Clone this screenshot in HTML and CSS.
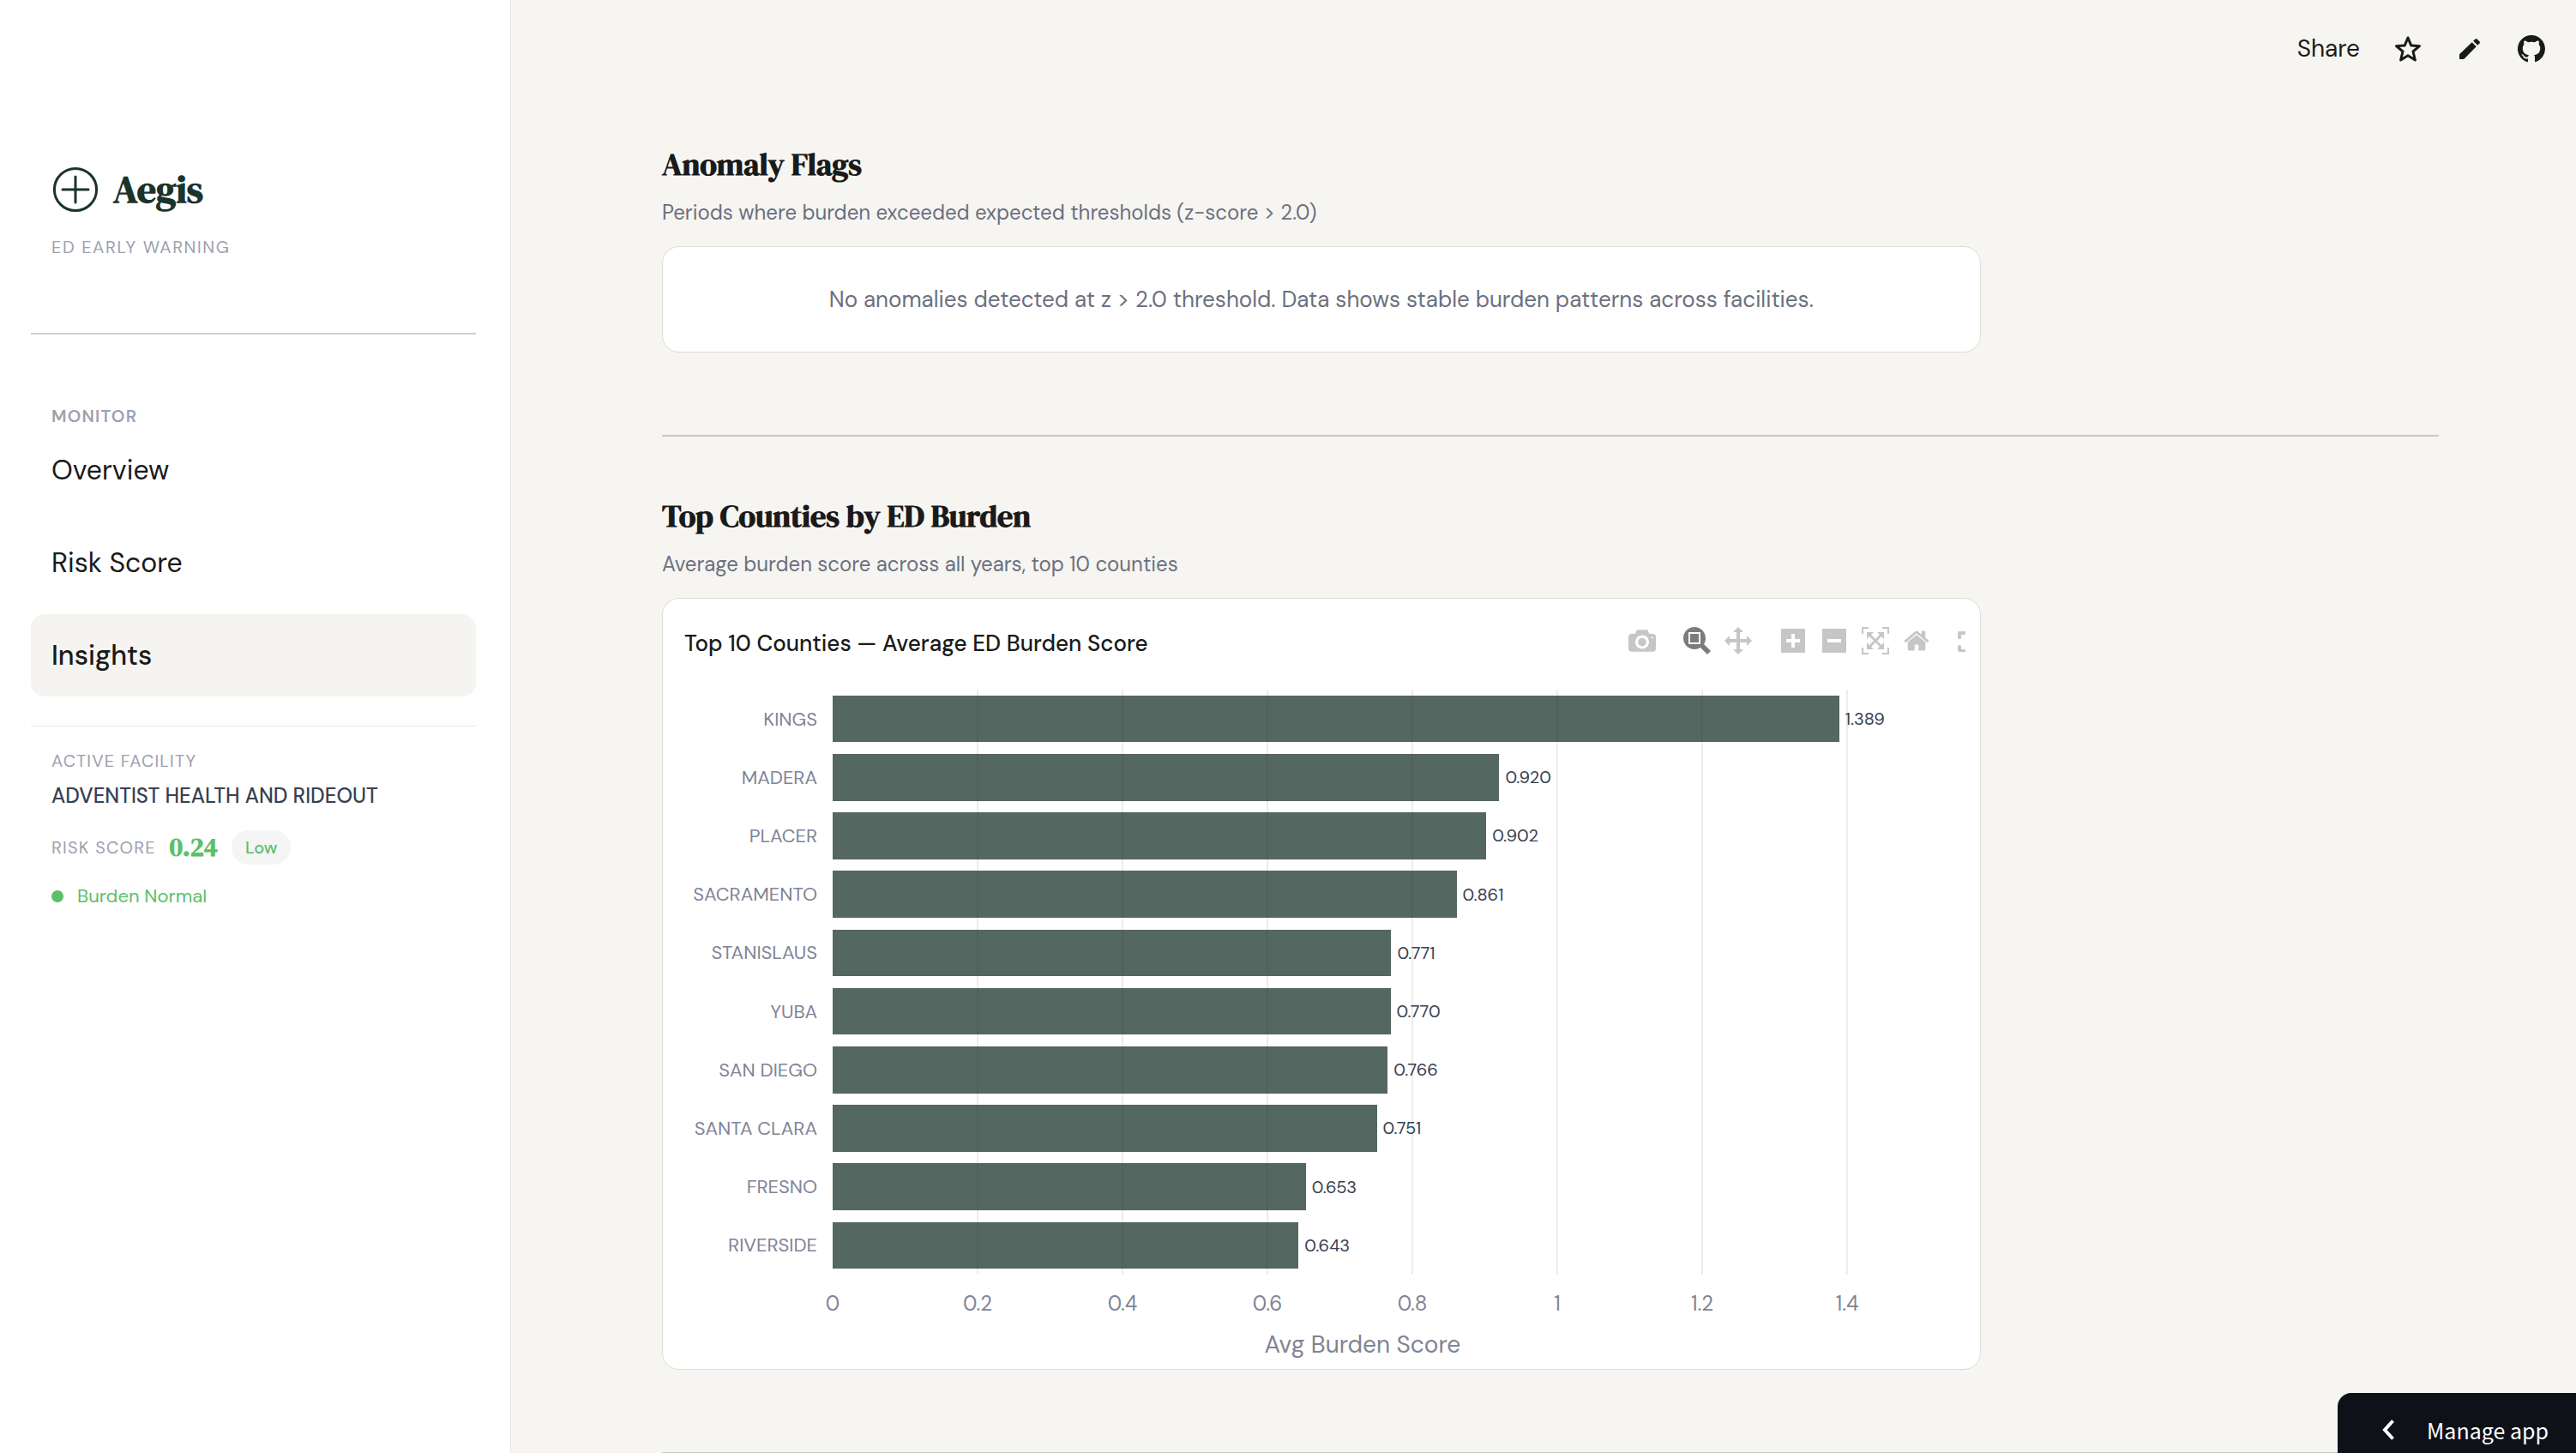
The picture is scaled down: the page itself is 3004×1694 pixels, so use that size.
FILE: index.html
```html
<!DOCTYPE html>
<html lang="en">
<head>
<meta charset="utf-8">
<meta name="viewport" content="width=device-width, initial-scale=1">
<title>Aegis – Insights</title>
<link rel="stylesheet" href="styles.css">
</head>
<body>
<div class="app">
  <aside class="sidebar">
    <div class="brand">
      <svg class="brand-mark" viewBox="0 0 28 28" fill="none" stroke="currentColor" stroke-width="1.5" stroke-linecap="round" aria-hidden="true"><circle cx="14" cy="14" r="12.3"/><path d="M14 6.5v15M6.5 14h15"/></svg>
      <span class="brand-name">Aegis</span>
    </div>
    <p class="tagline">ED EARLY WARNING</p>
    <hr class="rule">
    <p class="nav-title">MONITOR</p>
    <nav class="nav">
      <a class="nav-item" href="#overview">Overview</a>
      <a class="nav-item" href="#risk">Risk Score</a>
      <a class="nav-item is-active" href="#insights" aria-current="page">Insights</a>
    </nav>
    <section class="facility">
      <p class="caps">ACTIVE FACILITY</p>
      <p class="facility-name">ADVENTIST HEALTH AND RIDEOUT</p>
      <div class="risk"><span class="caps">RISK SCORE</span><strong class="risk-value">0.24</strong><span class="pill">Low</span></div>
      <p class="status"><span class="dot"></span>Burden Normal</p>
    </section>
  </aside>

  <main class="main">
    <header class="toolbar">
      <button class="tool" type="button">Share</button>
      <button class="tool" type="button" aria-label="Star"><svg viewBox="0 0 32 32" fill="none" stroke="currentColor" stroke-width="3" stroke-linejoin="round" aria-hidden="true"><path d="M16 3l3.700 8.900 9.800.8-7.500 6.300 2.400 10-8.400-5.200L7.600 29 10 19l-7.500-6.300 9.800-.8z"/></svg></button>
      <button class="tool" type="button" aria-label="Edit"><svg viewBox="0 0 24 24" fill="currentColor" aria-hidden="true"><path d="M3.600 21a.6.6 0 0 1-.6-.6v-3c0-.4.1-.7.400-1L14.060 6.190l3.750 3.750L7.500 20.500c-.2.300-.6.500-1 .5zM20.710 7.040a1 1 0 0 0 0-1.410l-2.340-2.340a1 1 0 0 0-1.410 0l-1.830 1.830 3.750 3.750z"/></svg></button>
      <button class="tool" type="button" aria-label="View source on GitHub"><svg viewBox="0 0 16 16" fill="currentColor" aria-hidden="true"><path d="M8 0C3.580 0 0 3.580 0 8c0 3.540 2.290 6.530 5.470 7.590.4.070.55-.17.55-.38 0-.19-.01-.82-.01-1.490-2.010.37-2.530-.49-2.690-.94-.09-.23-.48-.94-.82-1.130-.28-.15-.68-.52-.01-.53.63-.01 1.080.58 1.230.82.72 1.210 1.870.87 2.330.66.07-.52.28-.87.51-1.070-1.780-.2-3.640-.89-3.640-3.950 0-.87.31-1.590.82-2.150-.08-.2-.36-1.020.08-2.120 0 0 .67-.21 2.200.82.640-.18 1.320-.27 2-.27s1.360.09 2 .27c1.530-1.040 2.200-.82 2.200-.82.440 1.100.160 1.920.080 2.120.510.560.820 1.270.820 2.150 0 3.070-1.870 3.750-3.650 3.950.290.250.540.730.540 1.480 0 1.070-.01 1.930-.01 2.200 0 .21.150.46.550.38A8.010 8.010 0 0 0 16 8c0-4.420-3.580-8-8-8z"/></svg></button>
    </header>

    <div class="content">
      <section class="columns">
        <div>
          <h2 class="heading">Anomaly Flags</h2>
          <p class="subhead">Periods where burden exceeded expected thresholds (z-score &gt; 2.0)</p>
          <div class="card notice">No anomalies detected at z &gt; 2.0 threshold. Data shows stable burden patterns across facilities.</div>
        </div>
      </section>

      <hr class="rule rule-main">

      <section class="columns">
        <div>
          <h2 class="heading">Top Counties by ED Burden</h2>
          <p class="subhead">Average burden score across all years, top 10 counties</p>
          <figure class="card chart">
            <div class="chart-head">
              <figcaption class="chart-title">Top 10 Counties — Average ED Burden Score</figcaption>
              <div class="modebar">
                <button class="mode" type="button" aria-label="Download plot as a png"><svg viewBox="0 0 1000 1000"><path transform="matrix(1 0 0 -1 0 850)" d="m500 450c-83 0-150-67-150-150 0-83 67-150 150-150 83 0 150 67 150 150 0 83-67 150-150 150z m400 150h-120c-16 0-34 13-39 29l-31 93c-6 15-23 28-40 28h-340c-16 0-34-13-39-28l-31-94c-6-15-23-28-40-28h-120c-55 0-100-45-100-100v-450c0-55 45-100 100-100h800c55 0 100 45 100 100v450c0 55-45 100-100 100z m-400-550c-138 0-250 112-250 250 0 138 112 250 250 250 138 0 250-112 250-250 0-138-112-250-250-250z m365 380c-19 0-35 16-35 35 0 19 16 35 35 35 19 0 35-16 35-35 0-19-16-35-35-35z"/></svg></button>
                <button class="mode mode-group is-on" type="button" aria-label="Zoom"><svg viewBox="0 0 1000 1000"><path transform="matrix(1 0 0 -1 0 850)" d="m1000-25l-250 251c40 63 63 138 63 218 0 224-182 406-407 406-224 0-406-182-406-406s183-406 407-406c80 0 155 22 218 62l250-250 125 125z m-812 250l0 438 437 0 0-438-437 0z m62 375l313 0 0-312-313 0 0 312z"/></svg></button>
                <button class="mode" type="button" aria-label="Pan"><svg viewBox="0 0 1000 1000"><path transform="matrix(1 0 0 -1 0 850)" d="m1000 350l-187 188 0-125-250 0 0 250 125 0-188 187-187-187 125 0 0-250-250 0 0 125-188-188 186-187 0 125 252 0 0-250-125 0 187-188 188 188-125 0 0 250 250 0 0-126 187 188z"/></svg></button>
                <button class="mode mode-group" type="button" aria-label="Zoom in"><svg viewBox="0 0 875 1000"><path transform="matrix(1 0 0 -1 0 850)" d="m1 787l0-875 875 0 0 875-875 0z m687-500l-187 0 0-187-125 0 0 187-188 0 0 125 188 0 0 187 125 0 0-187 187 0 0-125z"/></svg></button>
                <button class="mode" type="button" aria-label="Zoom out"><svg viewBox="0 0 875 1000"><path transform="matrix(1 0 0 -1 0 850)" d="m0 788l0-876 875 0 0 876-875 0z m688-500l-500 0 0 125 500 0 0-125z"/></svg></button>
                <button class="mode" type="button" aria-label="Autoscale"><svg viewBox="0 0 1000 1000"><path transform="matrix(1 0 0 -1 0 850)" d="m250 850l-187 0-63 0 0-62 0-188 63 0 0 188 187 0 0 62z m688 0l-188 0 0-62 188 0 0-188 62 0 0 188 0 62-62 0z m-875-938l0 188-63 0 0-188 0-62 63 0 187 0 0 62-187 0z m875 188l0-188-188 0 0-62 188 0 62 0 0 62 0 188-62 0z m-125 188l-1 0-93-94-156 156 156 156 92-93 2 0 0 250-250 0 0-2 93-92-156-156-156 156 94 92 0 2-250 0 0-250 0 0 93 93 157-156-157-156-93 94 0 0 0-250 250 0 0 0-94 93 156 157 156-157-93-93 0 0 250 0 0 250z"/></svg></button>
                <button class="mode" type="button" aria-label="Reset axes"><svg viewBox="0 0 929 1000"><path transform="matrix(1 0 0 -1 0 850)" d="m786 296v-267q0-15-11-26t-25-10h-214v214h-143v-214h-214q-15 0-25 10t-11 26v267q0 1 0 2t0 2l321 264 321-264q1-1 1-4z m124 39l-34-41q-5-5-12-6h-2q-7 0-12 3l-386 322-386-322q-7-4-13-4-7 2-12 7l-35 41q-4 5-3 13t6 12l401 334q18 15 42 15t43-15l136-114v109q0 8 5 13t13 5h107q8 0 13-5t5-13v-227l122-102q5-5 6-12t-4-13z"/></svg></button>
                <button class="mode mode-group mode-cut" type="button" aria-label="Fullscreen"><svg viewBox="0 0 32 32"><path d="M2 5h6.500a.5.500 0 0 1 .5.500v2a1.500 1.500 0 0 1-1.500 1.500H4v3.500A1.500 1.500 0 0 1 2.500 14H1.500A1.500 1.500 0 0 1 0 12.500V7a2 2 0 0 1 2-2zM1.500 21h1A1.500 1.500 0 0 1 4 22.500V26h3.500A1.500 1.500 0 0 1 9 27.500v1a.5.500 0 0 1-.5.500H2a2 2 0 0 1-2-2v-4.500A1.500 1.500 0 0 1 1.500 21z"/></svg></button>
              </div>
            </div>
            <div class="chart-body">
              <ol class="y-labels">
                <li>KINGS</li><li>MADERA</li><li>PLACER</li><li>SACRAMENTO</li><li>STANISLAUS</li><li>YUBA</li><li>SAN DIEGO</li><li>SANTA CLARA</li><li>FRESNO</li><li>RIVERSIDE</li>
              </ol>
              <div class="plot">
                <div class="ticks gridlines" aria-hidden="true"><i></i><i></i><i></i><i></i><i></i><i></i><i></i><i></i></div>
                <div class="bars">
                  <div class="row"><span class="bar" style="width:95%"></span>1.389</div>
                  <div class="row"><span class="bar" style="width:62.92%"></span>0.920</div>
                  <div class="row"><span class="bar" style="width:61.69%"></span>0.902</div>
                  <div class="row"><span class="bar" style="width:58.89%"></span>0.861</div>
                  <div class="row"><span class="bar" style="width:52.73%"></span>0.771</div>
                  <div class="row"><span class="bar" style="width:52.66%"></span>0.770</div>
                  <div class="row"><span class="bar" style="width:52.39%"></span>0.766</div>
                  <div class="row"><span class="bar" style="width:51.36%"></span>0.751</div>
                  <div class="row"><span class="bar" style="width:44.66%"></span>0.653</div>
                  <div class="row"><span class="bar" style="width:43.98%"></span>0.643</div>
                </div>
              </div>
              <div class="x-axis">
                <div class="ticks tick-labels"><span>0</span><span>0.2</span><span>0.4</span><span>0.6</span><span>0.8</span><span>1</span><span>1.2</span><span>1.4</span></div>
                <p class="x-title">Avg Burden Score</p>
              </div>
            </div>
          </figure>
        </div>
      </section>

      <hr class="rule rule-main">
    </div>
  </main>
</div>

<button class="manage" type="button">
  <svg viewBox="0 0 14 24" fill="none" stroke="currentColor" stroke-width="4" aria-hidden="true"><path d="M12.500 1.500L3 12l9.500 10.500"/></svg>
  Manage app
</button>
</body>
</html>
```
FILE: styles.css
```css
:root {
  --ink: #1a1a1a;
  --muted: #6b7080;
  --faint: #9ca1af;
  --axis: #808495;
  --slate: #374151;
  --green: #5cbf6a;
  --forest: #1b342b;
  --paper: #f6f5f1;
  --serif: "DM Serif Display", "Liberation Serif", serif;
  --sans: "DM Sans", Roboto, sans-serif;
}

* { box-sizing: border-box; }

body {
  margin: 0;
  background: var(--paper);
  color: var(--ink);
  font-family: var(--sans);
}

p, h2, ol, figure { margin: 0; padding: 0; }
ol { list-style: none; }
svg { display: block; }

button {
  padding: 0;
  border: 0;
  background: none;
  color: inherit;
  font: inherit;
  cursor: pointer;
}

.app {
  display: grid;
  grid-template-columns: 596px minmax(0, 1fr);
  height: 100vh;
  overflow: hidden;
}

/* Sidebar */
.sidebar {
  padding: 193px 40px 0 36px;
  border-right: 1px solid #e6e5df;
  background: #fff;
}

.brand {
  display: flex;
  align-items: center;
  gap: 16px;
  height: 56px;
  padding-left: 24px;
  color: var(--forest);
}

.brand-mark { width: 56px; height: 56px; }

.brand-name {
  font: bold 44px/56px var(--serif);
}

.tagline, .nav-title, .caps {
  color: var(--faint);
  font-size: 20px;
  line-height: 30px;
  letter-spacing: 0.06em;
}

.tagline {
  margin-top: 24px;
  padding-left: 24px;
  letter-spacing: 0.08em;
}

.rule {
  height: 2px;
  margin: 85px 0 80px;
  border: 0;
  background: #cfcfcf;
}

.nav-title { padding-left: 24px; font-weight: 600; }

.nav { display: grid; gap: 12px; }

.nav-item {
  padding: 0 24px;
  border-radius: 16px;
  color: var(--ink);
  font-size: 32px;
  line-height: 96px;
  text-decoration: none;
}

.nav-item.is-active {
  background: #f5f4f0;
  font-weight: 500;
}

.facility {
  margin-top: 34px;
  padding: 25px 24px 0;
  border-top: 1px solid #e8e6df;
}

.facility-name {
  margin-top: 10px;
  color: var(--slate);
  font-size: 24px;
  font-weight: 500;
  line-height: 32px;
}

.risk {
  display: flex;
  align-items: center;
  gap: 16px;
  margin-top: 24px;
}

.risk-value {
  color: var(--green);
  font: bold 30px/40px var(--serif);
}

.pill {
  padding: 0 16px;
  border-radius: 20px;
  background: #f5f5f6;
  color: var(--green);
  font-size: 20px;
  font-weight: 500;
  line-height: 40px;
}

.status {
  display: flex;
  align-items: center;
  gap: 16px;
  margin-top: 21px;
  color: var(--green);
  font-size: 22px;
  line-height: 32px;
}

.dot {
  width: 14px;
  height: 14px;
  border-radius: 50%;
  background: currentColor;
}

/* Main area */
.main { overflow: hidden; }

.toolbar {
  display: flex;
  align-items: center;
  justify-content: flex-end;
  gap: 40px;
  height: 114px;
  padding-right: 36px;
}

.tool { font-size: 28px; line-height: 32px; }
.tool svg { width: 32px; height: 32px; }

.content { padding: 56px 160px 0 176px; }

.columns {
  display: grid;
  grid-template-columns: minmax(0, 3fr) minmax(0, 1fr);
  gap: 22px;
}

.heading {
  font: bold 36px/44px var(--serif);
}

.subhead {
  margin: 16px 0 21px;
  color: var(--muted);
  font-size: 24px;
  line-height: 36px;
}

.card {
  border: 1px solid #dddcd5;
  border-radius: 20px;
  background: #fff;
}

.notice {
  padding: 42px;
  color: var(--muted);
  font-size: 26px;
  line-height: 38px;
  text-align: center;
}

.rule-main {
  margin: 96px 0 71px;
  background: #c7c7c4;
}

/* Chart */
.chart { padding: 33px 17px 10px 25px; }

.chart-head {
  display: flex;
  align-items: flex-start;
  justify-content: space-between;
  height: 35px;
}

.chart-title {
  align-self: flex-end;
  font-size: 26px;
  font-weight: 500;
  line-height: 32px;
}

.modebar {
  display: flex;
  gap: 16px;
  color: #c6c6c6;
}

.mode { width: 32px; height: 32px; }
.mode svg { width: 32px; height: 32px; fill: currentColor; }
.mode-group { margin-left: 16px; }
.mode.is-on { color: #7c7c7c; }
.mode-cut { width: 9px; overflow: hidden; }

.chart-body {
  display: grid;
  grid-template: 682px auto / 155px minmax(0, 1fr);
  column-gap: 18px;
  margin: 38px 85px 0 0;
}

.y-labels, .bars {
  display: grid;
  grid-auto-rows: 1fr;
  align-items: center;
}

.y-labels {
  color: var(--axis);
  font-size: 22px;
  text-align: right;
}

.plot { display: grid; }
.gridlines, .bars { grid-area: 1 / 1; }

/* One cell per tick, each centred on its value: 0.2 of a 1.462 range is 13.68% */
.ticks {
  display: grid;
  grid-template-columns: repeat(8, 1fr);
  justify-items: center;
  width: 109.44%;
  margin-left: -6.84%;
}

.gridlines i { width: 2px; background: #efece8; }
.gridlines i:first-child { background: none; }

.row {
  display: flex;
  align-items: center;
  gap: 7px;
  height: 100%;
  color: var(--slate);
  font-size: 20px;
}

.bar {
  flex: none;
  height: 80%;
  background: rgb(27 52 43 / 75%);
}

.x-axis { grid-column: 2; color: var(--axis); }

.tick-labels {
  margin-top: 18px;
  font-size: 24px;
  line-height: 32px;
}

.x-title {
  margin-top: 14px;
  font-size: 28px;
  line-height: 36px;
  text-align: center;
}

/* Hosting badge, pinned to the window corner */
.manage {
  position: fixed;
  right: 0;
  bottom: 0;
  display: flex;
  align-items: center;
  gap: 38px;
  padding: 25px 32px 9px 52px;
  border-radius: 16px 0 0;
  background: #0e1117;
  color: #fff;
  font: 25px/36px "Source Sans Pro", "Noto Sans CJK JP", sans-serif;
}

.manage svg { width: 14px; height: 24px; }
```
